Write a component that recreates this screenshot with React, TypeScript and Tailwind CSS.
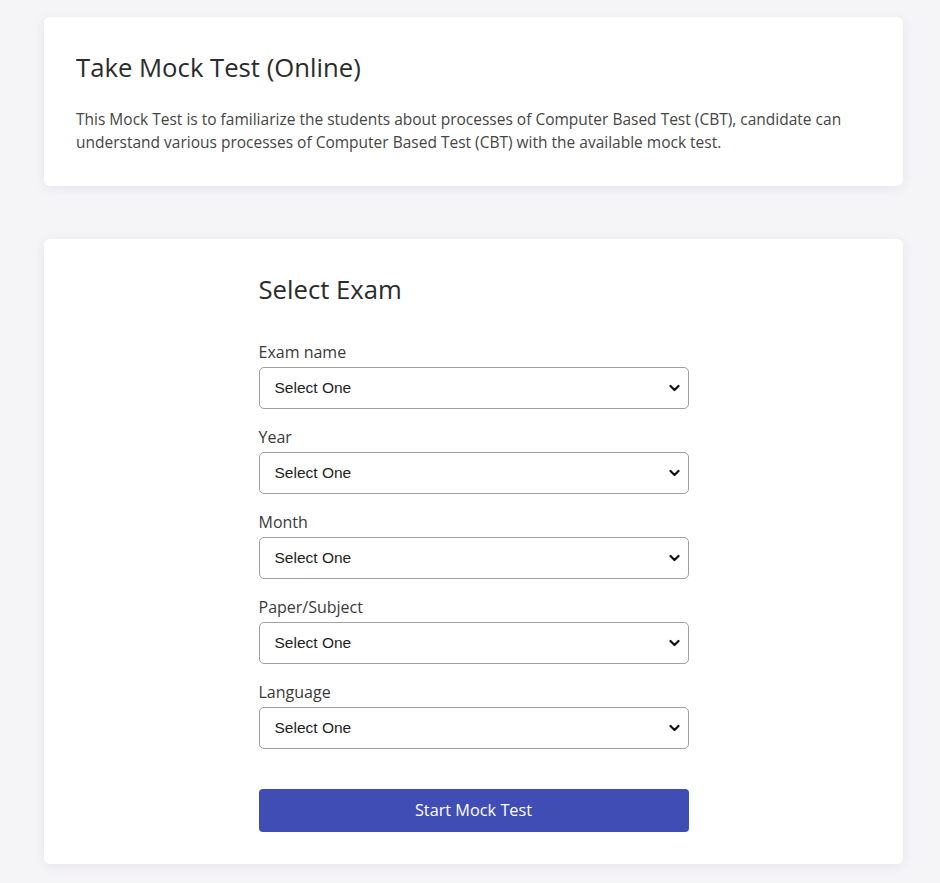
const fields = ['Exam name', 'Year', 'Month', 'Paper/Subject', 'Language'];

function SelectBox() {
  return (
    <div className="relative">
      <select
        defaultValue=""
        className="block h-[42px] w-full appearance-none rounded-[5px] border border-[#a0a0a0] bg-white pl-[15px] pr-8 text-[15.5px] text-[#222] outline-none"
        style={{ fontFamily: '"Liberation Sans", Arial, sans-serif' }}
      >
        <option value="">Select One</option>
      </select>
      <svg
        className="pointer-events-none absolute right-[9px] top-1/2 -translate-y-1/2"
        width="11"
        height="8"
        viewBox="0 0 11 8"
        fill="none"
      >
        <path d="M1.5 2 L5.5 6 L9.5 2" stroke="#111" strokeWidth="2.2" strokeLinecap="round" strokeLinejoin="round" />
      </svg>
    </div>
  );
}

export default function App() {
  return (
    <div
      className="min-h-[883px] bg-[#f5f4f7] pl-[44px] pr-[37px] pt-[17px] pb-5 text-[#333]"
      style={{ fontFamily: '"Open Sans", "Noto Sans", sans-serif' }}
    >
      <div className="rounded-[6px] bg-white px-8 pt-[34px] pb-[32px] shadow-[0_2px_12px_rgba(60,50,90,0.08)]">
        <h1 className="text-[25.7px] font-normal leading-[34px] text-[#2b2b2b]">Take Mock Test (Online)</h1>
        <p className="mt-[23px] text-[15.5px] leading-[23px] text-[#454545]">
          This Mock Test is to familiarize the students about processes of Computer Based Test (CBT), candidate can
          understand various processes of Computer Based Test (CBT) with the available mock test.
        </p>
      </div>

      <div className="mt-[53px] rounded-[6px] bg-white pt-[34px] pb-[32px] shadow-[0_2px_12px_rgba(60,50,90,0.08)]">
        <div className="mx-auto w-[430px]">
          <h2 className="text-[25.7px] font-normal leading-[34px] text-[#2b2b2b]">Select Exam</h2>
          <div className="mt-[34px] flex flex-col gap-[17px]">
            {fields.map((f) => (
              <div key={f}>
                <label className="block text-[16px] leading-[22px] text-[#3a3a3a]">{f}</label>
                <div className="mt-[4px]">
                  <SelectBox />
                </div>
              </div>
            ))}
          </div>
          <button className="mt-[40px] h-[43px] w-full rounded-[4px] bg-[#3f4db5] text-[16.3px] font-medium text-white">
            Start Mock Test
          </button>
        </div>
      </div>
    </div>
  );
}
